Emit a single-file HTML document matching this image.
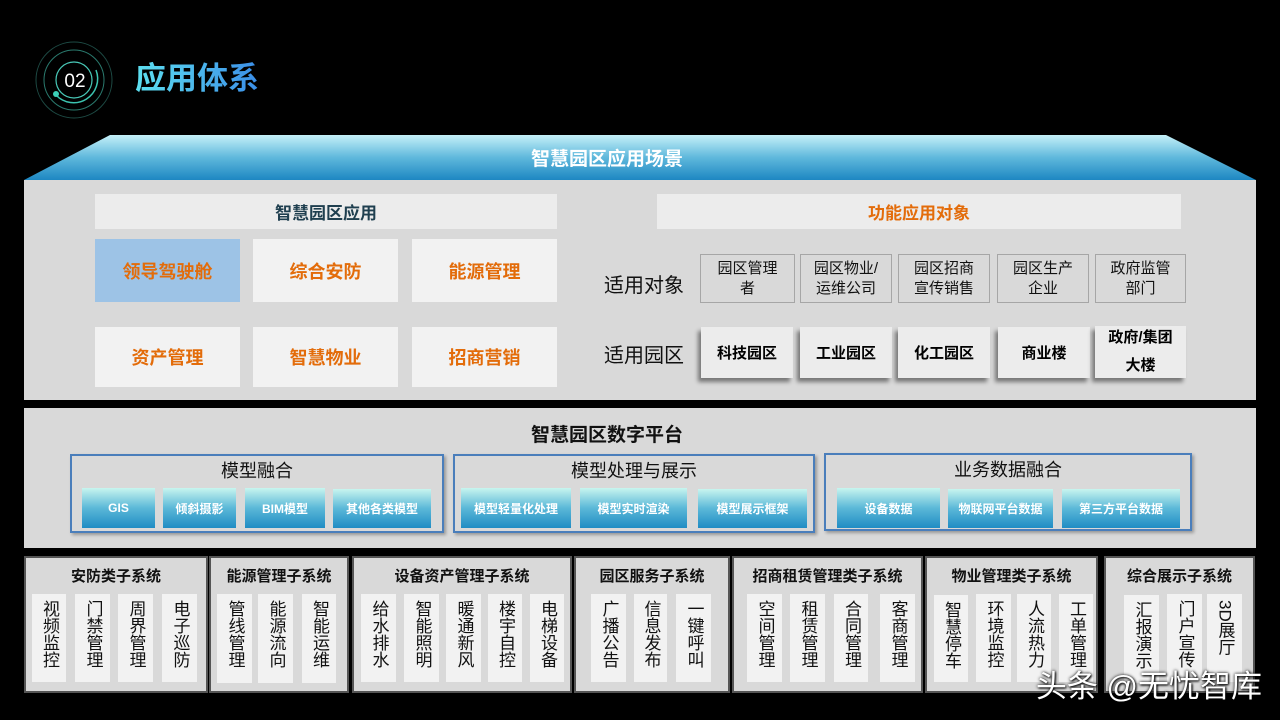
<!DOCTYPE html>
<html><head><meta charset="utf-8"><style>
*{margin:0;padding:0;box-sizing:border-box}
body{width:1280px;height:720px;background:#000;position:relative;overflow:hidden;font-family:"Liberation Sans","Noto Sans CJK SC",sans-serif}
.a{position:absolute;display:flex;align-items:center;justify-content:center;text-align:center}
.hd{background:#ececec;font-weight:bold;font-size:17px}
.tile{background:#f2f2f2;color:#e36c0a;font-weight:bold;font-size:18px}
.obj{background:#d9d9d9;border:1px solid #a6a6a6;font-size:15px;line-height:20px;color:#111}
.park{background:#ececec;font-weight:bold;font-size:15px;color:#000;box-shadow:-3px 4px 4px rgba(0,0,0,.45)}
.grp{border:2px solid #4a7ebb;box-shadow:2px 2px 3px rgba(0,0,0,.3)}
.gt{font-size:18px;color:#111}
.btn{background:linear-gradient(#c8f5ef,#5bb8d8 50%,#1f8cc4);color:#fff;font-weight:bold;font-size:12px}
.sys{background:#d9d9d9;border:2px solid #555}
.st{font-weight:bold;font-size:15px;color:#111}
.col{background:#f2f2f2;font-size:17px;line-height:18px;color:#111;align-items:flex-start;padding-top:6px}
.col span{writing-mode:vertical-rl;display:block}
</style></head><body>
<svg style="position:absolute;left:0;top:0" width="1280" height="720">
<defs><linearGradient id="bn" x1="0" y1="0" x2="0" y2="1"><stop offset="0" stop-color="#c5f0f8"/><stop offset=".5" stop-color="#5fb8dc"/><stop offset="1" stop-color="#1d87c2"/></linearGradient>
<linearGradient id="tt" x1="0" x2="1"><stop offset="0" stop-color="#5de0f0"/><stop offset="1" stop-color="#3b8ee8"/></linearGradient></defs>
<circle cx="74" cy="80" r="38" fill="none" stroke="#1d4a44" stroke-width="1"/>
<circle cx="74" cy="80" r="30" fill="none" stroke="#2a7a6e" stroke-width="1"/>
<path d="M 96 70 A 24 24 0 0 1 56 95" fill="none" stroke="#3cc4b0" stroke-width="1.5"/>
<circle cx="74" cy="80" r="18" fill="none" stroke="#49c9b8" stroke-width="1.2"/>
<circle cx="56" cy="94" r="3" fill="#3cd0b8"/>
<text x="75" y="87" fill="#fff" font-size="19" text-anchor="middle" font-family="Liberation Sans">02</text>
<text x="135" y="89" fill="url(#tt)" font-size="31" font-weight="bold" font-family="Noto Sans CJK SC">应用体系</text>
<polygon points="110,135 1166,135 1256,180 24,180" fill="url(#bn)"/>
</svg>
<div class="a" style="left:407px;top:137px;width:400px;height:40px;color:#fff;font-weight:bold;font-size:19px">智慧园区应用场景</div>
<div class="a" style="left:24px;top:180px;width:1232px;height:220px;background:#d9d9d9"></div>
<div class="a hd" style="left:95px;top:194px;width:462px;height:35px;color:#1f3f4f">智慧园区应用</div>
<div class="a hd" style="left:657px;top:194px;width:524px;height:35px;color:#e36c0a">功能应用对象</div>
<div class="a tile" style="left:95px;top:239px;width:145px;height:63px;background:#9dc3e6">领导驾驶舱</div>
<div class="a tile" style="left:253px;top:239px;width:145px;height:63px">综合安防</div>
<div class="a tile" style="left:412px;top:239px;width:145px;height:63px">能源管理</div>
<div class="a tile" style="left:95px;top:327px;width:145px;height:60px">资产管理</div>
<div class="a tile" style="left:253px;top:327px;width:145px;height:60px">智慧物业</div>
<div class="a tile" style="left:412px;top:327px;width:145px;height:60px">招商营销</div>
<div class="a" style="left:596px;top:268px;width:96px;height:30px;font-size:20px;color:#111">适用对象</div>
<div class="a" style="left:596px;top:338px;width:96px;height:30px;font-size:20px;color:#111">适用园区</div>
<div class="a obj" style="left:700px;top:254px;width:95px;height:49px">园区管理<br>者</div>
<div class="a obj" style="left:800px;top:254px;width:92px;height:49px">园区物业/<br>运维公司</div>
<div class="a obj" style="left:898px;top:254px;width:92px;height:49px">园区招商<br>宣传销售</div>
<div class="a obj" style="left:997px;top:254px;width:92px;height:49px">园区生产<br>企业</div>
<div class="a obj" style="left:1095px;top:254px;width:91px;height:49px">政府监管<br>部门</div>
<div class="a park" style="left:701px;top:327px;width:92px;height:51px">科技园区</div>
<div class="a park" style="left:800px;top:327px;width:92px;height:51px">工业园区</div>
<div class="a park" style="left:898px;top:327px;width:92px;height:51px">化工园区</div>
<div class="a park" style="left:998px;top:327px;width:92px;height:51px">商业楼</div>
<div class="a park" style="left:1095px;top:326px;width:91px;height:52px;line-height:28px">政府/集团<br>大楼</div>
<div class="a" style="left:24px;top:408px;width:1232px;height:140px;background:#d9d9d9"></div>
<div class="a" style="left:407px;top:418px;width:400px;height:30px;font-weight:bold;font-size:19px;color:#111">智慧园区数字平台</div>
<div class="a grp" style="left:70px;top:454px;width:374px;height:79px"></div>
<div class="a grp" style="left:453px;top:454px;width:362px;height:79px"></div>
<div class="a grp" style="left:824px;top:453px;width:368px;height:78px"></div>
<div class="a gt" style="left:70px;top:458px;width:374px;height:24px">模型融合</div>
<div class="a gt" style="left:453px;top:458px;width:362px;height:24px">模型处理与展示</div>
<div class="a gt" style="left:824px;top:457px;width:368px;height:24px">业务数据融合</div>
<div class="a btn" style="left:82px;top:488px;width:73px;height:40px">GIS</div>
<div class="a btn" style="left:163px;top:488px;width:73px;height:40px">倾斜摄影</div>
<div class="a btn" style="left:245px;top:488px;width:80px;height:40px">BIM模型</div>
<div class="a btn" style="left:333px;top:489px;width:98px;height:39px">其他各类模型</div>
<div class="a btn" style="left:461px;top:488px;width:110px;height:40px">模型轻量化处理</div>
<div class="a btn" style="left:580px;top:488px;width:107px;height:40px">模型实时渲染</div>
<div class="a btn" style="left:698px;top:489px;width:109px;height:39px">模型展示框架</div>
<div class="a btn" style="left:837px;top:488px;width:103px;height:40px">设备数据</div>
<div class="a btn" style="left:948px;top:489px;width:105px;height:39px">物联网平台数据</div>
<div class="a btn" style="left:1062px;top:489px;width:118px;height:39px">第三方平台数据</div>

<div class="a sys" style="left:24px;top:556px;width:184px;height:137px"></div>
<div class="a sys" style="left:209px;top:556px;width:140px;height:137px"></div>
<div class="a sys" style="left:352px;top:556px;width:220px;height:137px"></div>
<div class="a sys" style="left:574px;top:556px;width:156px;height:137px"></div>
<div class="a sys" style="left:732px;top:556px;width:191px;height:137px"></div>
<div class="a sys" style="left:925px;top:556px;width:173px;height:137px"></div>
<div class="a sys" style="left:1104px;top:556px;width:151px;height:137px"></div>
<div class="a st" style="left:24px;top:563px;width:184px;height:24px">安防类子系统</div>
<div class="a st" style="left:209px;top:563px;width:140px;height:24px">能源管理子系统</div>
<div class="a st" style="left:352px;top:563px;width:220px;height:24px">设备资产管理子系统</div>
<div class="a st" style="left:574px;top:563px;width:156px;height:24px">园区服务子系统</div>
<div class="a st" style="left:732px;top:563px;width:191px;height:24px">招商租赁管理类子系统</div>
<div class="a st" style="left:925px;top:563px;width:173px;height:24px">物业管理类子系统</div>
<div class="a st" style="left:1104px;top:563px;width:151px;height:24px">综合展示子系统</div>

<div class="a col" style="left:32px;top:594px;width:34px;height:88px"><span>视频监控</span></div>
<div class="a col" style="left:75px;top:594px;width:35px;height:88px"><span>门禁管理</span></div>
<div class="a col" style="left:118px;top:594px;width:35px;height:88px"><span>周界管理</span></div>
<div class="a col" style="left:162px;top:594px;width:35px;height:88px"><span>电子巡防</span></div>
<div class="a col" style="left:217px;top:594px;width:35px;height:89px"><span>管线管理</span></div>
<div class="a col" style="left:258px;top:594px;width:35px;height:89px"><span>能源流向</span></div>
<div class="a col" style="left:302px;top:594px;width:34px;height:89px"><span>智能运维</span></div>
<div class="a col" style="left:361px;top:594px;width:35px;height:88px"><span>给水排水</span></div>
<div class="a col" style="left:404px;top:594px;width:35px;height:88px"><span>智能照明</span></div>
<div class="a col" style="left:446px;top:594px;width:35px;height:88px"><span>暖通新风</span></div>
<div class="a col" style="left:488px;top:594px;width:34px;height:88px"><span>楼宇自控</span></div>
<div class="a col" style="left:530px;top:594px;width:34px;height:88px"><span>电梯设备</span></div>
<div class="a col" style="left:591px;top:594px;width:35px;height:88px"><span>广播公告</span></div>
<div class="a col" style="left:634px;top:594px;width:33px;height:88px"><span>信息发布</span></div>
<div class="a col" style="left:676px;top:594px;width:35px;height:88px"><span>一键呼叫</span></div>
<div class="a col" style="left:747px;top:594px;width:35px;height:88px"><span>空间管理</span></div>
<div class="a col" style="left:790px;top:594px;width:35px;height:88px"><span>租赁管理</span></div>
<div class="a col" style="left:834px;top:594px;width:34px;height:88px"><span>合同管理</span></div>
<div class="a col" style="left:880px;top:594px;width:35px;height:88px"><span>客商管理</span></div>
<div class="a col" style="left:934px;top:595px;width:34px;height:87px"><span>智慧停车</span></div>
<div class="a col" style="left:976px;top:594px;width:35px;height:88px"><span>环境监控</span></div>
<div class="a col" style="left:1017px;top:594px;width:34px;height:88px"><span>人流热力</span></div>
<div class="a col" style="left:1059px;top:594px;width:34px;height:88px"><span>工单管理</span></div>
<div class="a col" style="left:1124px;top:595px;width:35px;height:88px"><span>汇报演示</span></div>
<div class="a col" style="left:1167px;top:594px;width:35px;height:88px"><span>门户宣传</span></div>
<div class="a col" style="left:1207px;top:594px;width:35px;height:88px"><span>3D展厅</span></div>
<div class="a" style="left:1010px;top:662px;width:252px;height:42px;color:#fff;font-size:31px;justify-content:flex-end;text-shadow:0 0 3px #000,1px 1px 2px #000">头条 @无忧智库</div>
</body></html>
